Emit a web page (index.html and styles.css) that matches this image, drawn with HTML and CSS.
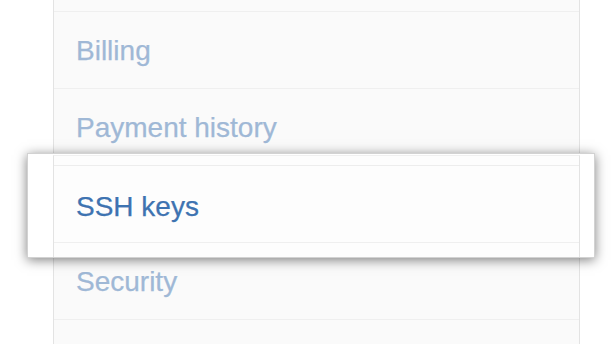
FILE: index.html
```html
<!DOCTYPE html>
<html>
<head>
<meta charset="utf-8">
<link rel="stylesheet" href="styles.css">
</head>
<body>
<div class="page">
  <ul class="menu">
    <li class="row partial"></li>
    <li class="row">Billing</li>
    <li class="row">Payment history</li>
    <li class="row active">SSH keys</li>
    <li class="row">Security</li>
    <li class="row"></li>
  </ul>
  <div class="spotlight"><div class="spotlight-frame"></div></div>
</div>
</body>
</html>
```
FILE: styles.css
```css
html, body {
  margin: 0;
  padding: 0;
  background: #ffffff;
  overflow: hidden;
}
.page {
  position: relative;
  width: 614px;
  height: 344px;
  overflow: hidden;
}
.menu {
  list-style: none;
  margin: 0 0 0 53px;
  padding: 0;
  width: 527px;
  box-sizing: border-box;
  border-left: 1px solid #e3e3e3;
  border-right: 1px solid #e3e3e3;
  background: #fafafa;
  font-family: "Liberation Sans", Arial, sans-serif;
  font-size: 28px;
  -webkit-text-stroke: 0.25px currentColor;
}
.row {
  height: 74px;
  line-height: 74px;
  padding-top: 2px;
  padding-left: 22px;
  border-bottom: 1px solid #efefef;
  color: #9fb8d6;
  white-space: nowrap;
}
.row.partial {
  height: 9px;
}
.row.active {
  position: relative;
  z-index: 2;
  color: #3e73b1;
  height: 71px;
  line-height: 71px;
  padding-top: 5px;
  box-shadow: 0 -1px 0 #ededed;
}
.spotlight {
  position: absolute;
  z-index: 1;
  left: 27px;
  top: 153px;
  width: 568px;
  height: 105px;
  box-sizing: border-box;
  background: #ffffff;
  border: 1px solid #d2d2d2;
  box-shadow: 0 2px 11px rgba(0, 0, 0, 0.5);
}
.spotlight-frame {
  position: absolute;
  left: 25px;
  width: 527px;
  top: 1px;
  bottom: 0;
  box-sizing: border-box;
  border-left: 1px solid #e3e3e3;
  border-right: 1px solid #e3e3e3;
  border-top: 1px solid #f0f0f0;
  background: #fdfdfd;
}
```
